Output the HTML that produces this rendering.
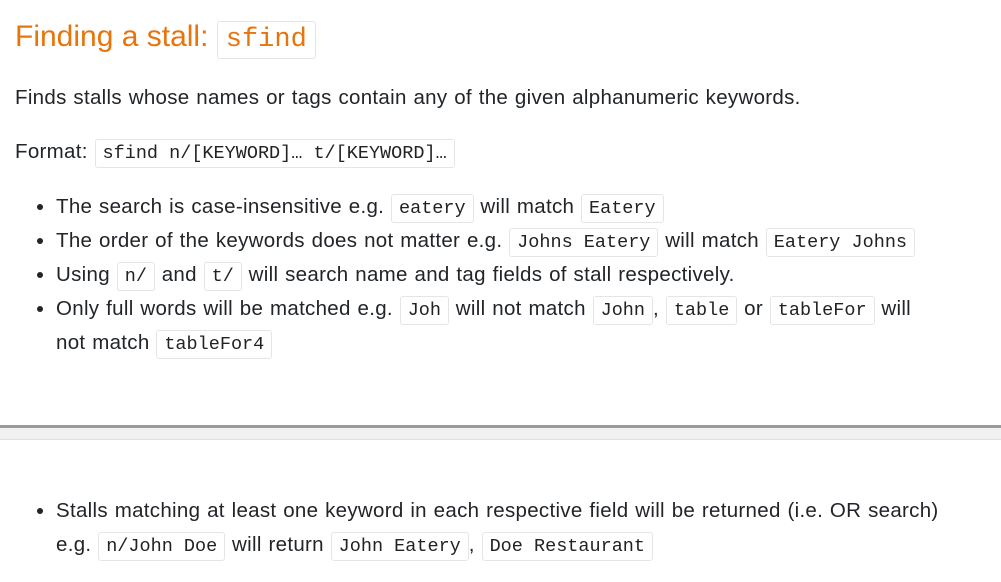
<!DOCTYPE html>
<html><head><meta charset="utf-8"><style>
body{margin:0;width:1001px;height:582px;overflow:hidden;background:#fff;font-family:"Liberation Sans",sans-serif;font-size:20.5px;letter-spacing:0.3px;word-spacing:0.8px;color:#212529;position:relative}
.a{position:absolute;left:0;right:0}
code{font-family:"Liberation Mono",monospace;font-size:18.5px;letter-spacing:0;word-spacing:0;border:1px solid #e5e5e5;border-radius:3px;padding:3px 7px;background:#fff;color:#222;line-height:1}
h1{position:absolute;left:15px;top:17px;margin:0;font-weight:normal;font-size:30px;letter-spacing:0;word-spacing:0;color:#e8740c;line-height:40px}
h1 code{font-size:27px;color:#e8740c;padding:3px 8px}
p{position:absolute;left:15px;margin:0;line-height:34px;white-space:nowrap}
ul{position:absolute;left:15px;margin:0;padding-left:41px;line-height:34px;width:940px;white-space:nowrap}
li{margin:0}
</style></head><body>
<h1>Finding a stall: <code>sfind</code></h1>
<p style="top:81px">Finds stalls whose names or tags contain any of the given alphanumeric keywords.</p>
<p style="top:135px">Format: <code>sfind n/[KEYWORD]… t/[KEYWORD]…</code></p>
<ul style="top:190px">
<li>The search is case-insensitive e.g. <code>eatery</code> will match <code>Eatery</code></li>
<li>The order of the keywords does not matter e.g. <code>Johns Eatery</code> will match <code>Eatery Johns</code></li>
<li>Using <code>n/</code> and <code>t/</code> will search name and tag fields of stall respectively.</li>
<li>Only full words will be matched e.g. <code>Joh</code> will not match <code>John</code>, <code>table</code> or <code>tableFor</code> will<br>not match <code>tableFor4</code></li>
</ul>
<div class="a" style="top:425px;height:3px;background:#9a9a9a"></div>
<div class="a" style="top:428px;height:11px;background:#f1f1f1;border-bottom:1px solid #e0e0e0"></div>
<ul style="top:494px">
<li>Stalls matching at least one keyword in each respective field will be returned (i.e. OR search)<br>e.g. <code>n/John Doe</code> will return <code>John Eatery</code>, <code>Doe Restaurant</code></li>
</ul>
</body></html>
